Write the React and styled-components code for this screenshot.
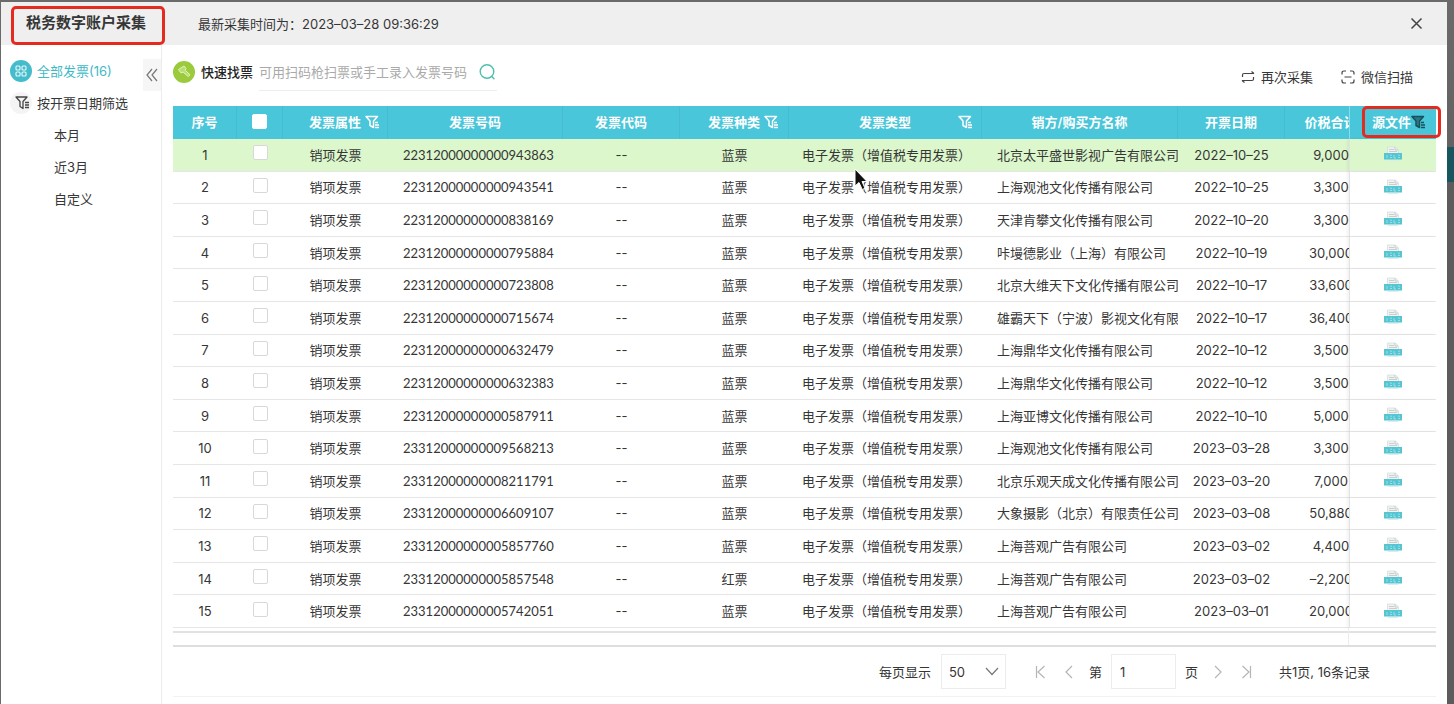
import { useState } from "react";
import styled, { createGlobalStyle } from "styled-components";

const GlobalStyle = createGlobalStyle`
  * {
    box-sizing: border-box;
  }

  body {
    margin: 0;
    color: #363636;
    font-family: Inter, "Noto Sans CJK SC", sans-serif;
    font-size: 13px;
    line-height: 20px;
  }

  button,
  input,
  select {
    color: inherit;
    font: inherit;
  }

  button {
    display: inline-flex;
    align-items: center;
    padding: 0;
    border: none;
    background: none;
    cursor: pointer;
  }
`;

const Page = styled.div`
  display: flex;
  min-height: 100vh;
  padding: 2px 0 0 1px;
  background: #6a6a6a;
`;

const Modal = styled.div`
  display: flex;
  flex: 1;
  flex-direction: column;
  min-width: 0;
  background: #fff;
`;

/* sliver of the dimmed page that shows beside the dialog */
const Backdrop = styled.div`
  width: 7px;
  background: linear-gradient(
    #6a6a6a 0,
    #626262 145px,
    #17565f 145px,
    #17565f 180px,
    #5c5c5c 180px
  );
`;

const Header = styled.header`
  display: flex;
  align-items: center;
  height: 43px;
  padding: 0 24px 0 10px;
  background: #efefef;
`;

const Title = styled.h1`
  width: 154px;
  height: 39px;
  margin: 4px 33px 0 0;
  padding: 2px 0 0 12px;
  border: 3px solid #e42b20;
  border-radius: 5px;
  font-size: 15px;
  font-weight: 600;
  line-height: 24px;
`;

const LastTime = styled.p`
  flex: 1;
  margin: 0;
`;

const Body = styled.div`
  display: flex;
  flex: 1;
`;

const Sidebar = styled.aside`
  display: flex;
  justify-content: space-between;
  width: 161px;
  padding-top: 14px;
  border-right: 1px solid #ececec;
`;

const Menu = styled.nav`
  display: flex;
  flex-direction: column;
  gap: 8px;
  padding-left: 9px;
`;

const MenuLink = styled.a`
  display: flex;
  align-items: center;
  gap: 5px;
  height: 24px;
  padding-left: ${(props) => (props.$nested ? "44px" : "0")};
  color: ${(props) => (props.$active ? "#3fb9c6" : "#363636")};
  text-decoration: none;
`;

const Collapse = styled.button`
  justify-content: center;
  width: 18px;
  height: 32px;
  background: #f6f6f6;
  color: #777;
`;

const Main = styled.main`
  display: flex;
  flex: 1;
  flex-direction: column;
  min-width: 0;
  padding: 0 11px 7px;
`;

const Toolbar = styled.div`
  display: flex;
  align-items: flex-start;
  justify-content: space-between;
  height: 61px;
  padding: 8px 23px 0 0;
`;

const SearchForm = styled.form`
  display: flex;
  align-items: center;
  height: 38px;
`;

const SearchLabel = styled.label`
  display: flex;
  align-items: center;
  gap: 6px;
  margin-right: 6px;
  color: #222;
  font-weight: 500;
`;

const SearchBox = styled.div`
  display: flex;
  align-items: center;
  width: 238px;
  height: 38px;
  border-bottom: 1px solid #ededed;
`;

const SearchInput = styled.input`
  flex: 1;
  min-width: 0;
  padding: 0;
  border: none;
  background: none;
  outline: none;

  &::placeholder {
    color: #aaa;
  }
`;

const SearchButton = styled.button`
  margin-right: 1px;
`;

const Actions = styled.div`
  display: flex;
  gap: 28px;
  padding-top: 14px;
`;

const Action = styled.button`
  gap: 6px;
`;

const TableArea = styled.div`
  position: relative;
  display: flex;
  flex: 1;
`;

const TableScroll = styled.div`
  display: flex;
  flex: 1;
  min-width: 0;
  overflow: hidden;
`;

const Table = styled.table`
  flex: 1 0 auto;
  width: 100%;
  min-width: 1291px;
  border-spacing: 0;
  table-layout: fixed;
`;

const HeadCell = styled.th`
  width: ${(props) => props.$width}px;
  height: 33px;
  padding: 0 0 2px;
  border-right: 1px solid #45bdcf;
  background: #49c6d9;
  color: #fff;
  font-weight: 600;
  line-height: 20px;
  white-space: nowrap;
`;

const FixedHeadCell = styled(HeadCell)`
  position: sticky;
  right: 0;
  border-right: none;
  border-left: 1px solid #8bdbe7;
`;

const HeadContent = styled.span`
  display: grid;
  grid-template-columns: 1fr auto 1fr;
  align-items: center;
  column-gap: 4px;

  svg {
    grid-column: 3;
    justify-self: ${(props) => (props.$iconEnd ? "end" : "start")};
    margin-right: ${(props) => (props.$iconEnd ? "8px" : "0")};
  }
`;

const HeadLabel = styled.span`
  grid-column: 2;
`;

const FileHead = styled.span`
  display: flex;
  align-items: center;
  padding-left: 22px;
`;

const Row = styled.tr`
  background: ${(props) => (props.$selected ? "#dbf7cb" : "#fff")};
`;

const Cell = styled.td`
  height: 32px;
  padding: 0 0 0 ${(props) => (props.$left ? "15px" : "0")};
  overflow: hidden;
  border-bottom: 1px solid #e6e6e6;
  text-align: ${(props) => (props.$left ? "left" : "center")};
  white-space: nowrap;
`;

const NumberCell = styled(Cell)`
  font-family: Lato, Inter, sans-serif;
`;

const TypeCell = styled(Cell)`
  padding-left: 2px;
`;

const CheckCell = styled(Cell)`
  padding-bottom: 4px;
`;

const FixedCell = styled(Cell)`
  position: sticky;
  right: 0;
  padding-bottom: 4px;
  border-left: 1px solid #e2e2e2;
  background: inherit;
  box-shadow: -2px 0 3px rgba(0, 0, 0, 0.05);
`;

const Checkbox = styled.input.attrs({ type: "checkbox" })`
  display: block;
  width: 15px;
  height: 15px;
  margin: 0 auto;
  appearance: none;
  border: 1px solid ${(props) => (props.$head ? "#fff" : "#d8d8d8")};
  border-radius: 2px;
  background: #fff;

  &:checked {
    background: #49c6d9;
  }
`;

const FileButton = styled.button`
  vertical-align: middle;
`;

const HighlightBox = styled.div`
  position: absolute;
  top: 0;
  right: -5px;
  width: 79px;
  height: 32px;
  border: 3px solid #e42b20;
  border-radius: 5px;
  pointer-events: none;
`;

const ScrollTrack = styled.div`
  display: flex;
  justify-content: flex-end;
  height: 19px;
  border-bottom: 2px solid #dedede;
  background: linear-gradient(#e2e2e2, #e2e2e2) 0 3px / 100% 2px no-repeat;

  &::after {
    width: 87px;
    border-left: 1px solid #ececec;
    content: "";
  }
`;

const Pagination = styled.footer`
  display: flex;
  align-items: center;
  justify-content: flex-end;
  height: 50px;
  padding-right: 66px;
  border-bottom: 1px solid #f2f2f2;
`;

const SelectBox = styled.div`
  display: grid;
  align-items: center;
  width: 65px;
  height: 35px;
  margin: 0 29px 0 10px;
  border: 1px solid #ececec;

  > * {
    grid-area: 1 / 1;
  }

  svg {
    justify-self: end;
    margin-right: 6px;
    pointer-events: none;
  }
`;

const PageSize = styled.select`
  width: 100%;
  height: 33px;
  padding: 0 7px;
  appearance: none;
  border: none;
  background: none;
`;

const PageButton = styled.button`
  width: 12px;
  color: #b5b5b5;
`;

const PageSteps = styled.div`
  display: flex;
  gap: 16px;
`;

const PageLabel = styled.label`
  display: flex;
  align-items: center;
  gap: 9px;
  margin: 0 14px;
`;

const PageInput = styled.input`
  width: 65px;
  height: 35px;
  padding: 0 8px;
  border: 1px solid #ececec;
`;

const Total = styled.span`
  margin-left: 27px;
`;

const Pointer = styled.svg`
  position: absolute;
  top: 167px;
  left: 853px;
  pointer-events: none;
`;

const columns = [
  { label: "序号", width: 64 },
  { label: "", width: 46, check: true },
  { label: "发票属性", width: 105, filter: true },
  { label: "发票号码", width: 175 },
  { label: "发票代码", width: 117 },
  { label: "发票种类", width: 109, filter: true },
  { label: "发票类型", width: 193, filter: true, iconEnd: true },
  { label: "销方/购买方名称", width: 196 },
  { label: "开票日期", width: 107 },
  { label: "价税合计", width: 92 },
];

const invoices = [
  ["22312000000000943863", "蓝票", "北京太平盛世影视广告有限公司", "2022–10–25", "9,000"],
  ["22312000000000943541", "蓝票", "上海观池文化传播有限公司", "2022–10–25", "3,300"],
  ["22312000000000838169", "蓝票", "天津肯攀文化传播有限公司", "2022–10–20", "3,300"],
  ["22312000000000795884", "蓝票", "咔墁德影业（上海）有限公司", "2022–10–19", "30,000"],
  ["22312000000000723808", "蓝票", "北京大维天下文化传播有限公司", "2022–10–17", "33,600"],
  ["22312000000000715674", "蓝票", "雄霸天下（宁波）影视文化有限", "2022–10–17", "36,400"],
  ["22312000000000632479", "蓝票", "上海鼎华文化传播有限公司", "2022–10–12", "3,500"],
  ["22312000000000632383", "蓝票", "上海鼎华文化传播有限公司", "2022–10–12", "3,500"],
  ["22312000000000587911", "蓝票", "上海亚博文化传播有限公司", "2022–10–10", "5,000"],
  ["23312000000009568213", "蓝票", "上海观池文化传播有限公司", "2023–03–28", "3,300"],
  ["23312000000008211791", "蓝票", "北京乐观天成文化传播有限公司", "2023–03–20", "7,000"],
  ["23312000000006609107", "蓝票", "大象摄影（北京）有限责任公司", "2023–03–08", "50,880"],
  ["23312000000005857760", "蓝票", "上海菩观广告有限公司", "2023–03–02", "4,400"],
  ["23312000000005857548", "红票", "上海菩观广告有限公司", "2023–03–02", "–2,200"],
  ["23312000000005742051", "蓝票", "上海菩观广告有限公司", "2023–03–01", "20,000"],
];

function FilterIcon({ color = "currentColor", fill = "none" }) {
  return (
    <svg width="15" height="14" viewBox="0 0 15 14" fill="none" stroke={color} strokeWidth="1.5">
      <path d="M1 1.500h11.500L8.500 6v6.500L5 10.500V6z" fill={fill} strokeLinejoin="round" />
      <path d="M10 7.500h3M10 10h4M10 12.500h4" />
    </svg>
  );
}

function AllIcon() {
  return (
    <svg width="22" height="22" viewBox="0 0 22 22">
      <circle cx="11" cy="11" r="11" fill="#45bccb" />
      <g fill="none" stroke="#e8fbfd" strokeWidth="1.1">
        <rect x="6" y="6" width="4" height="4" rx="1" />
        <rect x="12" y="6" width="4" height="4" rx="1" />
        <rect x="6" y="12" width="4" height="4" rx="1" />
        <rect x="12" y="12" width="4" height="4" rx="1" />
      </g>
    </svg>
  );
}

function DateFilterIcon() {
  return (
    <svg width="22" height="22" viewBox="0 0 22 22" fill="none" stroke="#444" strokeWidth="1.3">
      <circle cx="11" cy="11" r="11" fill="#f4f4f4" stroke="none" />
      <path d="M6 5h11L13 9.500v7L10 14.500v-5z" strokeLinejoin="round" />
      <path d="M15 10.500h4M15 13h4M15 15.500h4" />
    </svg>
  );
}

function ScannerIcon() {
  return (
    <svg width="22" height="22" viewBox="0 0 22 22">
      <circle cx="11" cy="11" r="11" fill="#9bcb3c" />
      <path
        d="M5.500 8.500 11 5l2 2.500-.8 1.800 4.800 4.400-1.700 1.800-5.200-4.400-2.300.7z"
        fill="#b9dd70"
        stroke="#e4f4bd"
        strokeWidth="1"
        strokeLinejoin="round"
      />
    </svg>
  );
}

function SearchIcon() {
  return (
    <svg width="18" height="18" viewBox="0 0 18 18" fill="none" stroke="#4fc0ac" strokeWidth="1.4">
      <circle cx="9" cy="8.500" r="6.800" />
      <path d="m13.500 13.200 2.500 2.600" strokeLinecap="round" />
    </svg>
  );
}

function FileIcon() {
  return (
    <svg width="18" height="16" viewBox="0 0 18 16">
      <path d="M3.500 7V1h8l3 3v3" fill="#f1f3f3" stroke="#d8dcdd" strokeWidth="0.8" />
      <path d="M5 3.500h5M5 5.500h8M11 1v3h3" fill="none" stroke="#c4c9cb" strokeWidth="0.9" />
      <path d="M0 7h18v6.500H0z" fill="#55c5d2" />
      <path d="M3 9v3M6 9.200h2M6 11.500h2M10 9v3h2M14 9.200h2M14 11.500h2" stroke="#9adfe7" fill="none" />
      <path d="M3.500 14.500h11" stroke="#d9efef" />
    </svg>
  );
}

function PageIcon({ d }) {
  return (
    <svg width="12" height="14" viewBox="0 0 12 14" fill="none" stroke="currentColor" strokeWidth="1.2">
      <path d={d} />
    </svg>
  );
}

function SideMenu() {
  return (
    <Sidebar>
      <Menu>
        <MenuLink href="#all" $active>
          <AllIcon />
          全部发票(16)
        </MenuLink>
        <MenuLink href="#date">
          <DateFilterIcon />
          按开票日期筛选
        </MenuLink>
        {["本月", "近3月", "自定义"].map((label) => (
          <MenuLink key={label} href="#range" $nested>
            {label}
          </MenuLink>
        ))}
      </Menu>
      <Collapse type="button" aria-label="收起">
        <svg width="12" height="14" viewBox="0 0 12 14" fill="none" stroke="currentColor" strokeWidth="1.2">
          <path d="M6 1 1 7l5 6M11 1 6 7l5 6" />
        </svg>
      </Collapse>
    </Sidebar>
  );
}

function InvoiceTable() {
  const [checked, setChecked] = useState([]);

  const toggle = (no) => {
    setChecked(
      checked.includes(no) ? checked.filter((item) => item !== no) : [...checked, no]
    );
  };

  const toggleAll = (e) => {
    setChecked(e.target.checked ? invoices.map(([no]) => no) : []);
  };

  return (
    <TableArea>
      <TableScroll>
        <Table>
          <thead>
            <tr>
              {columns.map((column) => (
                <HeadCell key={column.label} $width={column.width}>
                  {column.check ? (
                    <Checkbox
                      $head
                      aria-label="全选"
                      checked={checked.length === invoices.length}
                      onChange={toggleAll}
                    />
                  ) : (
                    <HeadContent $iconEnd={column.iconEnd}>
                      <HeadLabel>{column.label}</HeadLabel>
                      {column.filter && <FilterIcon />}
                    </HeadContent>
                  )}
                </HeadCell>
              ))}
              <FixedHeadCell $width={87}>
                <FileHead>
                  源文件
                  <FilterIcon color="#17505c" fill="#2b7885" />
                </FileHead>
              </FixedHeadCell>
            </tr>
          </thead>
          <tbody>
            {invoices.map(([no, kind, name, date, amount], index) => (
              <Row key={no} $selected={index === 0}>
                <Cell>{index + 1}</Cell>
                <CheckCell>
                  <Checkbox
                    aria-label={no}
                    checked={checked.includes(no)}
                    onChange={() => toggle(no)}
                  />
                </CheckCell>
                <Cell>销项发票</Cell>
                <NumberCell $left>{no}</NumberCell>
                <Cell>--</Cell>
                <Cell>{kind}</Cell>
                <TypeCell>电子发票（增值税专用发票）</TypeCell>
                <Cell $left>{name}</Cell>
                <Cell>{date}</Cell>
                <Cell>{amount}</Cell>
                <FixedCell>
                  <FileButton type="button" aria-label="源文件">
                    <FileIcon />
                  </FileButton>
                </FixedCell>
              </Row>
            ))}
          </tbody>
        </Table>
      </TableScroll>
      <HighlightBox />
    </TableArea>
  );
}

function Pager() {
  const [page, setPage] = useState("1");

  return (
    <Pagination>
      <label htmlFor="page-size">每页显示</label>
      <SelectBox>
        <PageSize id="page-size" defaultValue="50">
          <option>20</option>
          <option>50</option>
          <option>100</option>
        </PageSize>
        <svg width="14" height="9" viewBox="0 0 14 9" fill="none" stroke="#777" strokeWidth="1.2">
          <path d="m1 1 6 6.500L13 1" />
        </svg>
      </SelectBox>
      <PageSteps>
        <PageButton type="button" aria-label="首页">
          <PageIcon d="M1.500 1v12M9.500 1 3 7l6.500 6" />
        </PageButton>
        <PageButton type="button" aria-label="上一页">
          <PageIcon d="M9 1 3 7l6 6" />
        </PageButton>
      </PageSteps>
      <PageLabel>
        第
        <PageInput value={page} onChange={(e) => setPage(e.target.value)} />
        页
      </PageLabel>
      <PageSteps>
        <PageButton type="button" aria-label="下一页">
          <PageIcon d="m3 1 6 6-6 6" />
        </PageButton>
        <PageButton type="button" aria-label="末页">
          <PageIcon d="M10.500 1v12M2.500 1 9 7l-6.500 6" />
        </PageButton>
      </PageSteps>
      <Total>共1页, 16条记录</Total>
    </Pagination>
  );
}

function App() {
  return (
    <Page>
      <GlobalStyle />
      <Modal>
        <Header>
          <Title>税务数字账户采集</Title>
          <LastTime>最新采集时间为：2023–03–28 09:36:29</LastTime>
          <button type="button" aria-label="关闭">
            <svg width="13" height="13" viewBox="0 0 13 13" stroke="#444" strokeWidth="1.5">
              <path d="m1.500 1.500 10 10M11.500 1.500l-10 10" />
            </svg>
          </button>
        </Header>
        <Body>
          <SideMenu />
          <Main>
            <Toolbar>
              <SearchForm onSubmit={(e) => e.preventDefault()}>
                <SearchLabel htmlFor="quick-search">
                  <ScannerIcon />
                  快速找票
                </SearchLabel>
                <SearchBox>
                  <SearchInput id="quick-search" placeholder="可用扫码枪扫票或手工录入发票号码" />
                  <SearchButton type="submit" aria-label="搜索">
                    <SearchIcon />
                  </SearchButton>
                </SearchBox>
              </SearchForm>
              <Actions>
                <Action type="button">
                  <svg width="14" height="12" viewBox="0 0 14 12" fill="none" stroke="#444" strokeWidth="1.2">
                    <path d="M1.500 6V4q0-1.500 1.500-1.500h10M10.500.5l2.500 2M12.500 6v2q0 1.500-1.500 1.500H1M3.500 11.500 1 9.500" />
                  </svg>
                  再次采集
                </Action>
                <Action type="button">
                  <svg width="14" height="14" viewBox="0 0 14 14" fill="none" stroke="#444" strokeWidth="1.2">
                    <path d="M1 4.500V3q0-2 2-2h2M9 1h2q2 0 2 2v1.500M13 9.500V11q0 2-2 2H9M5 13H3q-2 0-2-2V9.500M3.500 7h7" />
                  </svg>
                  微信扫描
                </Action>
              </Actions>
            </Toolbar>
            <InvoiceTable />
            <ScrollTrack />
            <Pager />
          </Main>
        </Body>
      </Modal>
      <Backdrop />
      <Pointer width="16" height="25" viewBox="0 0 16 25" aria-hidden="true">
        <path
          d="M2 2v17l4-3.500 3.200 7 2.800-1.200-3-6.800H14z"
          fill="#111"
          stroke="#fff"
          strokeWidth="1"
        />
      </Pointer>
    </Page>
  );
}

export default App;
